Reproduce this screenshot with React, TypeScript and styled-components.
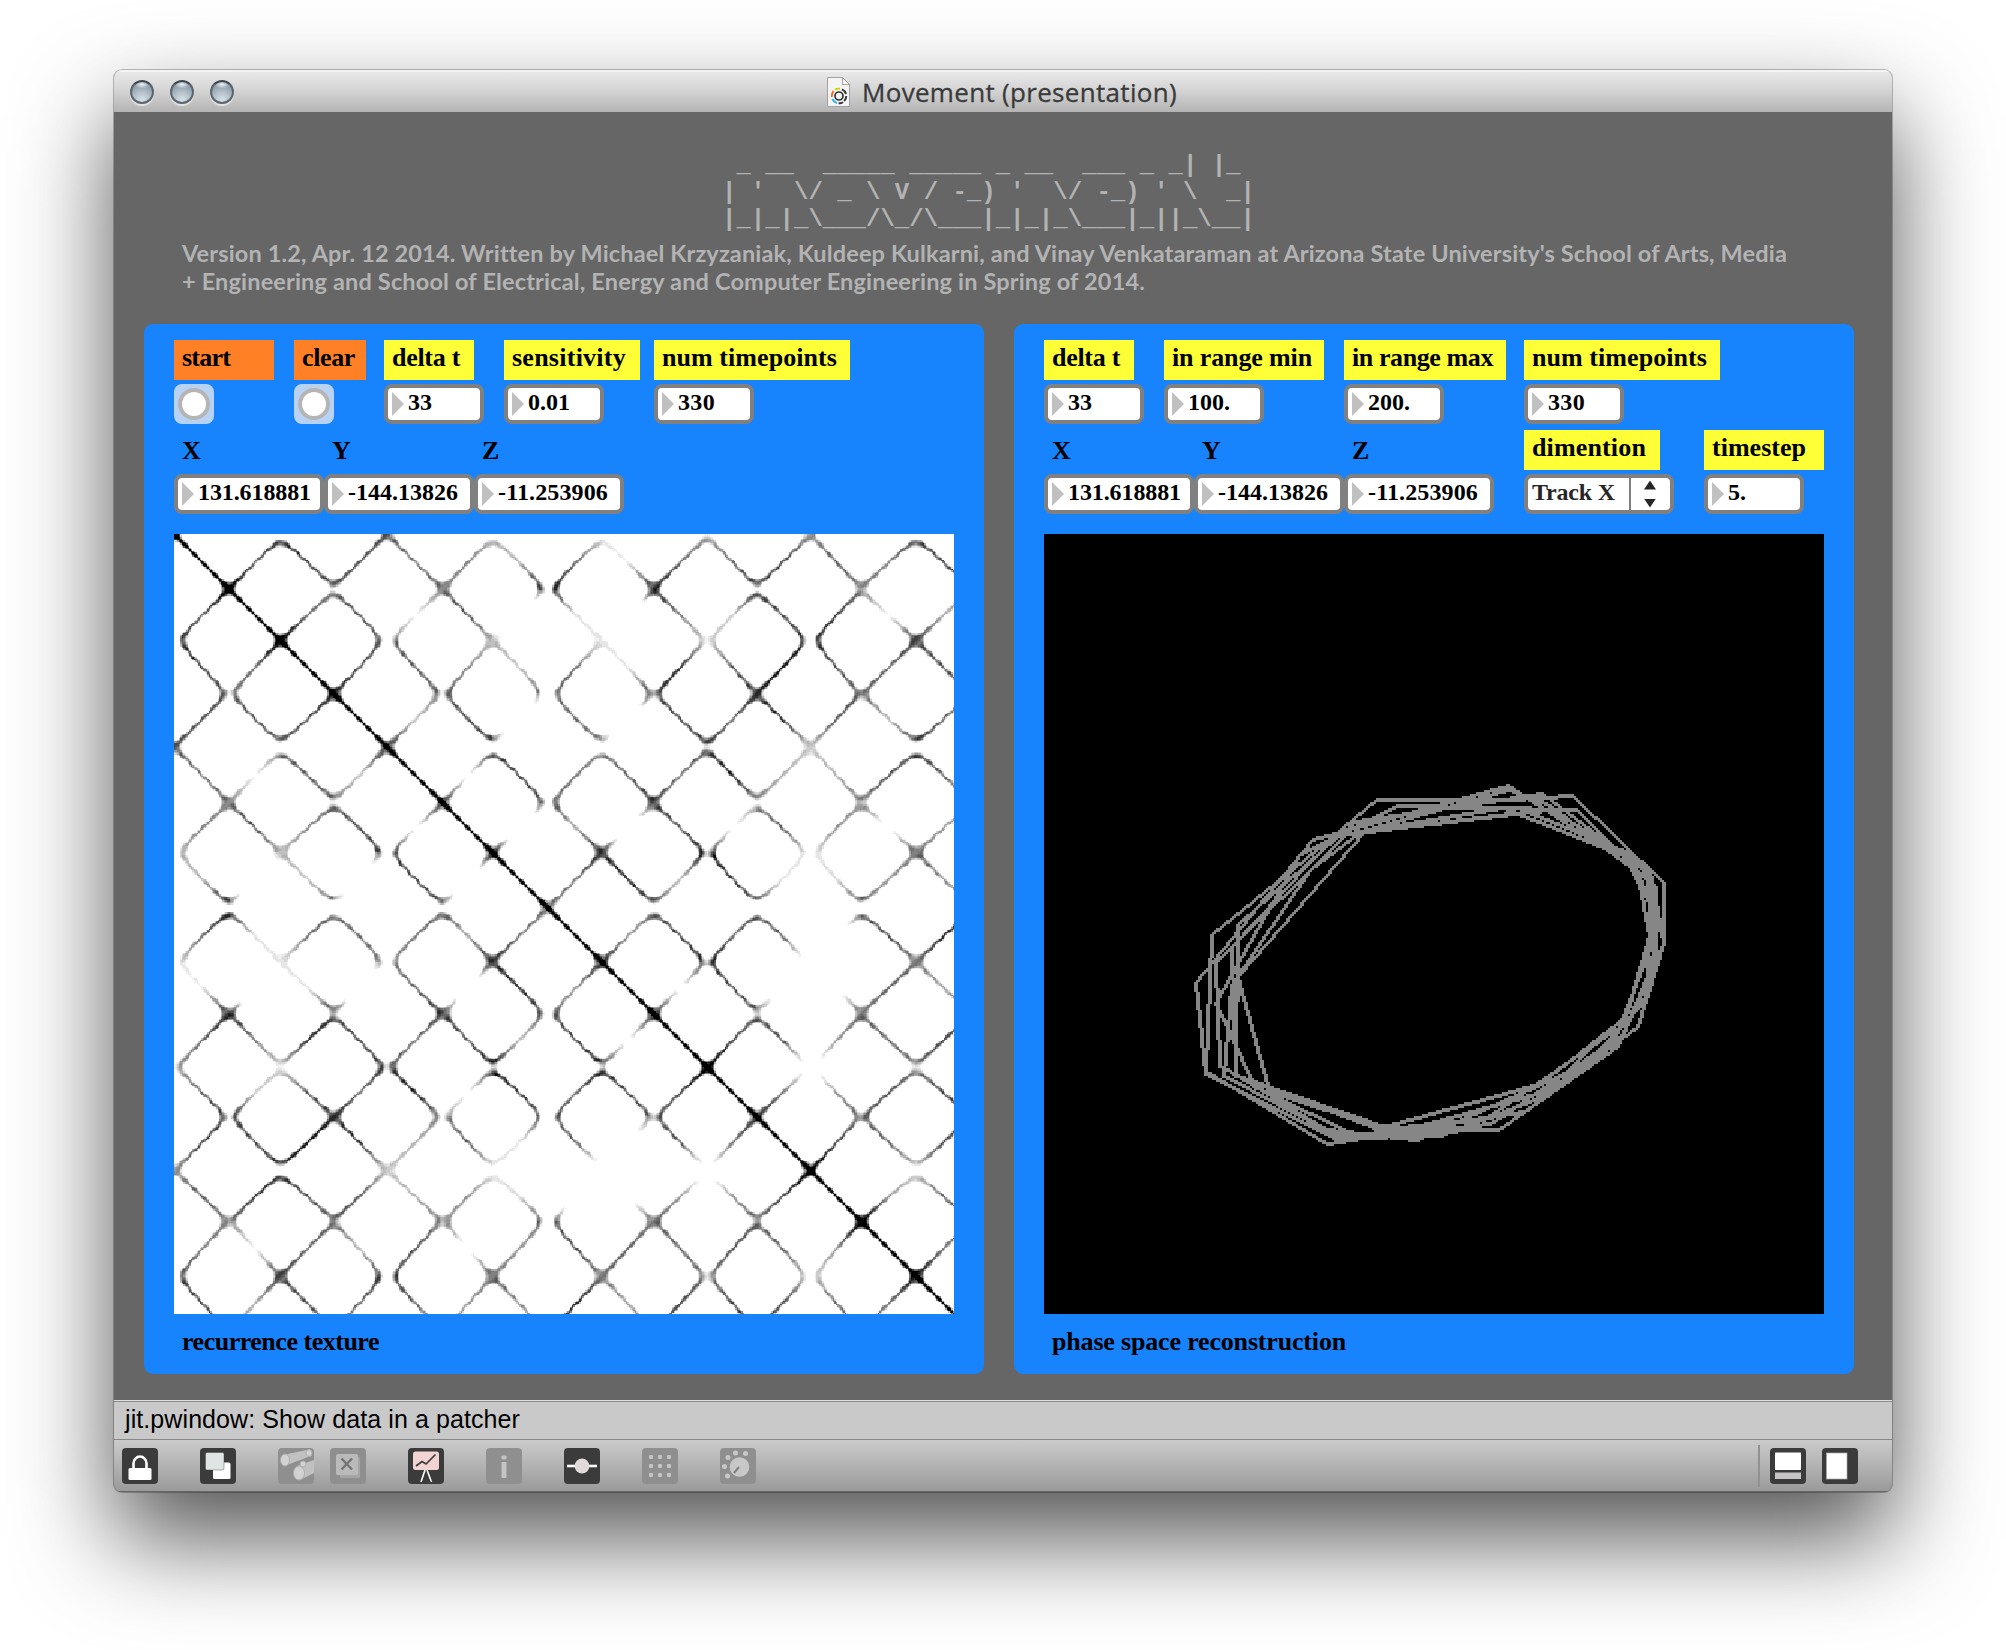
import React, { useLayoutEffect, useMemo, useRef, useState } from "react";
import styled, { createGlobalStyle } from "styled-components";

const Global = createGlobalStyle`
  * { box-sizing: border-box; }
  body { margin: 0; background: #fff; overflow: hidden; }
`;

/* ---------- window chrome ---------- */

const Desktop = styled.main`
  width: 2006px;
  height: 1650px;
  padding: 70px 0 0 114px;
  background: #fff;
`;

const Window = styled.section`
  width: 1778px;
  height: 1422px;
  display: flex;
  flex-direction: column;
  border-radius: 8px;
  overflow: hidden;
  background: #666;
  box-shadow: 0 0 0 1px rgba(0, 0, 0, 0.24), 0 46px 98px rgba(0, 0, 0, 0.68);
`;

const TitleBar = styled.header`
  height: 42px;
  flex: none;
  display: flex;
  align-items: center;
  padding: 2px 0 0 16px;
  background: linear-gradient(#ebebeb, #d3d3d3 50%, #b4b4b4);
  box-shadow: inset 0 2px 0 #f4f4f4;
`;

const Lights = styled.div`
  display: flex;
  gap: 16px;
  width: 697px;
`;

const Light = styled.span`
  width: 24px;
  height: 24px;
  border-radius: 50%;
  border: 2px solid #5c6670;
  border-top-color: #3f464e;
  background: radial-gradient(ellipse 8px 4px at 50% 12%, #eef2f5, transparent),
    radial-gradient(circle at 50% 90%, #d9e1e7 0, #b3c0ca 40%, #8193a1 85%);
  box-shadow: 0 2px 1px rgba(255, 255, 255, 0.6);
`;

const Title = styled.h1`
  margin: 0 0 0 12px;
  font: 400 26px/34px "Open Sans", "Noto Sans", sans-serif;
  -webkit-text-stroke: 0.3px #3a3a3a;
  color: #3a3a3a;
`;

const Patcher = styled.div`
  height: 1288px;
  flex: none;
  background: #666;
  display: flex;
  flex-direction: column;
`;

const Masthead = styled.div`
  height: 212px;
  flex: none;
  padding-top: 40px;
  color: #b3b3b3;
`;

const Banner = styled.pre`
  margin: 0 0 0 608px;
  height: 87px;
  font: 700 24px/27px "Liberation Mono", monospace;
`;

const Credits = styled.p`
  margin: 0 0 0 68px;
  font: 700 23.5px/28px Lato, sans-serif;
  white-space: nowrap;
`;

const Panels = styled.div`
  display: flex;
  gap: 30px;
  padding-left: 30px;
`;

const Panel = styled.article`
  width: 840px;
  height: 1050px;
  padding: 16px 30px 0;
  border-radius: 9px;
  background: #1783fc;
  color: #000;
  font: 700 26px/36px "Liberation Serif", serif;
`;

const ControlRow = styled.div<{ $cols: string }>`
  display: grid;
  grid-template-columns: ${(p) => p.$cols};
  height: 84px;
  margin-bottom: 6px;
`;

const Control = styled.div`
  display: flex;
  flex-direction: column;
  align-items: flex-start;
  gap: 4px;
`;

const Tag = styled.div<{ $w: number; $tone?: "orange" | "none" }>`
  width: ${(p) => p.$w}px;
  height: 40px;
  padding: ${(p) => (p.$tone === "none" ? 3 : 0)}px 0 0 8px;
  background: ${(p) => (p.$tone === "orange" ? "#ff8025" : p.$tone === "none" ? "transparent" : "#ffff37")};
  white-space: nowrap;
`;

const Field = styled.div<{ $w: number }>`
  width: ${(p) => p.$w}px;
  height: 40px;
  display: flex;
  border: 4px solid #808080;
  border-radius: 8px;
  background: #fff;
  font-size: 24px;
  line-height: 28px;
  white-space: nowrap;
`;

const Grip = styled.i`
  width: 12px;
  height: 24px;
  margin: 4px 4px 0;
  flex: none;
  background: #c0c0c0;
  clip-path: polygon(0 0, 100% 50%, 0 100%);
`;

const MenuText = styled.div`
  width: 103px;
  padding-left: 4px;
  border-right: 2px solid #808080;
  color: #262626;
`;

const Arrows = styled.div`
  flex: 1;
  display: flex;
  flex-direction: column;
  align-items: center;
  justify-content: center;
  gap: 9px;
  padding-right: 1px;
`;

const Arrow = styled.i<{ $down?: boolean }>`
  width: 12px;
  height: 9px;
  background: #262626;
  clip-path: ${(p) => (p.$down ? "polygon(0 0, 100% 0, 50% 100%)" : "polygon(50% 0, 100% 100%, 0 100%)")};
`;

const Bang = styled.div`
  width: 40px;
  height: 40px;
  display: grid;
  place-items: center;
  border-radius: 8px;
  background: #b7d2f2;
`;

const BangDot = styled.span`
  width: 32px;
  height: 32px;
  border: 4px solid #b5b5b5;
  border-radius: 50%;
  background: #fff;
`;

const Screen = styled.svg<{ $bg: string }>`
  display: block;
  width: 780px;
  height: 780px;
  margin-top: 14px;
  background: ${(p) => p.$bg};
`;

const Controls = styled.div`
  height: 180px;
  margin-bottom: 14px;
`;

const Caption = styled.div`
  padding: 10px 0 0 8px;
  white-space: nowrap;
`;

const Status = styled.div`
  height: 40px;
  flex: none;
  padding-left: 11px;
  background: #c9c9c9;
  border-top: 1px solid #dcdcdc;
  border-bottom: 1px solid #868686;
  box-shadow: inset 0 1px 0 #8c8c8c;
  color: #000;
  font: 400 25px/36px "Liberation Sans", Arial, sans-serif;
`;

const Toolbar = styled.footer`
  flex: 1;
  display: flex;
  align-items: flex-start;
  padding: 8px 34px 0 8px;
  background: linear-gradient(#cbcbcb, #b5b5b5 45%, #9a9a9a);
  border-bottom: 1px solid #666;
`;

const Tool = styled.span<{ $gap: number }>`
  display: flex;
  margin-right: ${(p) => p.$gap}px;
`;

const Divider = styled.span`
  width: 2px;
  height: 42px;
  margin: -3px 10px 0 auto;
  background: #919191;
`;

const TextRun = styled.span`
  display: inline-block;
  white-space: pre;
`;

/* Tracks a run of text out (or in) until it measures the given width. */
function Fit({ w, children }: { w: number; children: string }) {
  const ref = useRef<HTMLSpanElement>(null);
  const [tracking, setTracking] = useState(0);
  useLayoutEffect(() => {
    const el = ref.current;
    if (el) setTracking((w - el.getBoundingClientRect().width) / children.length);
  }, [w, children]);
  return (
    <TextRun ref={ref} style={{ letterSpacing: tracking }}>
      {children}
    </TextRun>
  );
}

/* ---------- recurrence plot ---------- */

const SPAN = 1548;
const TURNS = [8, 117, 219, 325, 430, 541, 640, 750, 857, 960, 1066, 1164, 1271, 1371, 1481, 1590].map(
  (t) => (t - 8) / SPAN
);
const PEAKS = [1.13, -1, 1, -0.93, 1.13, -1, 1, -1.1, 1, -0.985, 1.065, -0.925, 1.12, -0.965, 1, -1];

/* Strength where two turning points meet, per row, starting on the diagonal in steps of two. */
const NODES = [
  [1, 0.85, 0.65, 0.3, 0.08, 0.35, 0.4, 0.75],
  [1, 0.65, 0.6, 0.85, 0.85, 0.75, 0.5, 0.6],
  [1, 0.6, 0.3, 0.07, 0.2, 0.85, 0.75],
  [1, 0.6, 0.6, 0.75, 0.8, 0.6, 0.6],
  [1, 0.75, 0.5, 0.75, 0.2, 0.75],
  [0.7, 0.7, 0.8, 0.45, 0.5, 0.4],
  [0.95, 0.85, 0.95, 0.08, 0.65],
  [0.6, 0.65, 0.65, 0.6, 0.6],
  [1, 0.85, -0.2, 0.5],
  [0.9, 0.65, 0.6, 0.6],
  [1, -0.2, 0.5],
  [0.95, 0.6, 0.6],
  [1, 0.2],
  [1, 0.5],
  [1],
  [1],
];

/* Strength halfway between turning points, per row, starting one cell right of the diagonal. */
const CELLS = [
  [0.5, 0.75, 0.6, 0.5, 0.6, 0.3, 0.6, 0.05, 0.55, 0.6, 0.7, 0.65, 0.4, 0.7],
  [0.5, 0.65, 0, 0.65, -1, 0.1, -1, 0.5, 0.15, 0.65, 0.7, 0, 0.3],
  [0.65, 0.6, 0.55, 0.2, 0.5, 0.08, 0.75, 0.6, 0.85, 0.65, 0.5, 0.65],
  [0.25, 0.7, -0.8, 0.55, -0.8, 0.7, 0.45, 0.8, 0.6, 0.25, 0.65],
  [-0.05, 0.7, 0.5, 0.6, 0.5, 0.85, 0.3, 0.3, 0.85, 0.6],
  [-0.8, 0.3, -0.6, 0.6, -0.05, 0.65, 0.55, -0.1, 0.4],
  [0.5, 0.85, 0.25, 0.75, 0.08, 0.15, 0.5, 0.4],
  [0.45, 0.7, 0.6, 0.6, -0.4, 0.7, 0.8],
  [-0.1, 0.65, -0.5, -0.2, 0.6, 0.35],
  [0.7, 0.65, 0.35, 0.6, 0.7],
  [0.55, 0.4, 0.6, 0.75],
  [0.7, 0.6, 0.65],
  [0.35, 0.6],
  [0.55],
  [],
];

const node = (i: number, j: number) => {
  const a = Math.min(i, j);
  const b = Math.max(i, j);
  return NODES[a]?.[(b - a) / 2] ?? 0.5;
};
const cell = (i: number, j: number) => {
  const a = Math.min(i, j);
  const b = Math.max(i, j);
  return a === b ? 1 : CELLS[a]?.[b - a - 1] ?? 0.5;
};

function recurrencePaths(size: number, levels: number) {
  const seg: number[] = [];
  const frac: number[] = [];
  const val: number[] = [];
  const slope: number[] = [];
  for (let n = 0; n < size; n++) {
    const t = (n + 0.5) / size;
    let k = 0;
    while (k < 14 && TURNS[k + 1] <= t) k++;
    const len = TURNS[k + 1] - TURNS[k];
    const u = (t - TURNS[k]) / len;
    const half = (PEAKS[k] - PEAKS[k + 1]) / 2;
    const wobble = 0.045 * Math.sin(Math.PI * u) * Math.sin(n * 0.95);
    seg.push(k);
    frac.push(u);
    val.push((PEAKS[k] + PEAKS[k + 1]) / 2 + half * Math.cos(Math.PI * u) + wobble);
    slope.push((half * Math.PI * Math.sin(Math.PI * u)) / (len * size));
  }
  const paths: string[] = Array(levels).fill("");
  for (let r = 0; r < size; r++) {
    let run = -1;
    let start = 0;
    for (let c = 0; c <= size; c++) {
      let lv = -1;
      if (c < size) {
        const i = seg[r];
        const j = seg[c];
        const reach = 0.75 * Math.hypot(slope[r], slope[c]) + 0.07;
        let d = 1.35 * (1 - Math.abs(val[r] - val[c]) / reach);
        if (d > 0) {
          const even = (i + j) % 2 === 0;
          const s = even ? (frac[r] + frac[c]) / 2 : (frac[r] + 1 - frac[c]) / 2;
          const n1 = even ? node(i, j) : node(i, j + 1);
          const n2 = even ? node(i + 1, j + 1) : node(i + 1, j);
          const mid = cell(i, j);
          let m = s < 0.5 ? n1 + (mid - n1) * s * 2 : mid + (n2 - mid) * (s * 2 - 1);
          if (Math.abs(r - c) < 3) m = 1;
          else m *= 0.88 + 0.16 * Math.sin((r + c) * 0.55);
          d = Math.min(1, d) * m;
          if (d > 0.02) lv = Math.min(levels - 1, Math.floor(d * levels));
        }
      }
      if (lv !== run) {
        if (run >= 0) paths[run] += `M${start} ${r}h${c - start}v1h${start - c}z`;
        run = lv;
        start = c;
      }
    }
  }
  return paths;
}

function RecurrencePlot() {
  const paths = useMemo(() => recurrencePaths(520, 20), []);
  return (
    <Screen $bg="#fff" viewBox="0 0 520 520" shapeRendering="crispEdges">
      {paths.map((d, k) => {
        const g = Math.round(255 * (1 - (k + 1) / 20));
        return <path key={k} d={d} fill={`rgb(${g},${g},${g})`} />;
      })}
    </Screen>
  );
}

/* ---------- phase space orbit ---------- */

const ORBIT = [
  [48, 638], [395, 212], [985, 50], [1350, 285], [1425, 430], [1340, 740], [1080, 940], [600, 1075], [270, 965],
  [172, 620], [550, 185], [1110, 122], [1410, 300], [1452, 515], [1375, 765], [1030, 1028], [440, 1122], [80, 905],
  [96, 490], [340, 295], [585, 90], [985, 90], [1175, 78], [1450, 342], [1450, 515], [1315, 825], [955, 1078], [455, 1090], [130, 920],
  [155, 640], [390, 300], [540, 185], [985, 60], [1110, 110], [1375, 310], [1410, 500], [1330, 760], [920, 1045], [600, 1080], [168, 915],
  [172, 460], [520, 155], [1085, 70], [1405, 310], [1415, 520], [1300, 810], [930, 1060], [540, 1105], [225, 955],
  [105, 697], [360, 250], [655, 105], [1190, 122], [1415, 345], [1400, 690], [1215, 880], [710, 1108], [440, 1080], [120, 885],
  [105, 575], [500, 190], [965, 112], [1360, 270], [1435, 470], [1395, 680], [1090, 965], [655, 1085], [168, 915],
  [157, 530], [460, 200], [1035, 125], [1350, 250], [1425, 350], [1425, 560], [1325, 800], [1060, 990], [780, 1095], [460, 1105], [75, 912],
  [48, 638],
];

function orbitPath() {
  let d = "";
  const pts = ORBIT.map(([x, y]) => [Math.round(x / 6 + 68), Math.round(y / 6 + 118)]);
  for (let k = 1; k < pts.length; k++) {
    const [x0, y0] = pts[k - 1];
    const [x1, y1] = pts[k];
    const steps = Math.max(Math.abs(x1 - x0), Math.abs(y1 - y0));
    const flat = Math.abs(x1 - x0) >= Math.abs(y1 - y0);
    for (let s = 0; s <= steps; s++) {
      const x = Math.round(x0 + ((x1 - x0) * s) / steps);
      const y = Math.round(y0 + ((y1 - y0) * s) / steps);
      d += flat ? `M${x} ${y - 1}h1v2h-1z` : `M${x - 1} ${y}h2v1h-2z`;
    }
  }
  return d;
}

function PhasePlot() {
  const d = useMemo(orbitPath, []);
  return (
    <Screen $bg="#000" viewBox="0 0 390 390" shapeRendering="crispEdges">
      <path d={d} fill="#868686" />
    </Screen>
  );
}

/* ---------- small parts ---------- */

function NumberField({ w = 100, t, children }: { w?: number; t: number; children: string }) {
  return (
    <Field $w={w}>
      <Grip />
      <Fit w={t}>{children}</Fit>
    </Field>
  );
}

type LabelledProps = {
  label: string;
  tagW: number;
  labelW: number;
  tone?: "orange" | "none";
  children: React.ReactNode;
};

function Labelled({ label, tagW, labelW, tone, children }: LabelledProps) {
  return (
    <Control>
      <Tag $w={tagW} $tone={tone}>
        <Fit w={labelW}>{label}</Fit>
      </Tag>
      {children}
    </Control>
  );
}

function Coordinates() {
  return (
    <>
      <Labelled label="X" tagW={60} labelW={17} tone="none">
        <NumberField w={150} t={113}>131.618881</NumberField>
      </Labelled>
      <Labelled label="Y" tagW={60} labelW={17} tone="none">
        <NumberField w={150} t={110}>-144.13826</NumberField>
      </Labelled>
      <Labelled label="Z" tagW={60} labelW={16} tone="none">
        <NumberField w={150} t={110}>-11.253906</NumberField>
      </Labelled>
    </>
  );
}

function DocIcon() {
  return (
    <svg width="23" height="30" viewBox="0 0 23 30">
      <path d="M.5.5h15l7 7v22H.5z" fill="#f4f4f4" stroke="#a2a2a2" />
      <path d="M15.5.5v7h7z" fill="#fff" stroke="#8e8e8e" strokeWidth=".8" />
      <circle cx="12" cy="19" r="4" fill="none" stroke="#333" strokeWidth="1.7" />
      <g fill="none" strokeWidth="1.9">
        <path d="M8 12.6A7.3 7.3 0 0 1 13 11.8" stroke="#c9d400" />
        <path d="M4.8 20A7.3 7.3 0 0 1 6.6 14" stroke="#f26a21" />
        <path d="M10 26A7.3 7.3 0 0 1 5.4 22" stroke="#1fb4ec" />
        <path d="M15 12.4A7.3 7.3 0 0 1 19 17M19.3 19A7.3 7.3 0 0 1 17.2 24M16 25.2A7.3 7.3 0 0 1 11.6 26.3" stroke="#333" />
      </g>
    </svg>
  );
}

const Icon = ({ dim, children }: { dim?: boolean; children: React.ReactNode }) => (
  <svg width="36" height="36" viewBox="0 0 36 36">
    <rect width="36" height="36" rx="4" fill={dim ? "#8f8f8f" : "#3b3b3b"} />
    {children}
  </svg>
);

const dots = [9, 18, 27];

export default function App() {
  return (
    <Desktop>
      <Global />
      <Window>
        <TitleBar>
          <Lights>
            <Light />
            <Light />
            <Light />
          </Lights>
          <DocIcon />
          <Title>
            <Fit w={315}>Movement (presentation)</Fit>
          </Title>
        </TitleBar>

        <Patcher>
          <Masthead>
            <Banner>
              {[
                " _ __  _____ _____ _ __  ___ _ _| |_",
                "| '  \\/ _ \\ V / -_) '  \\/ -_) ' \\  _|",
                "|_|_|_\\___/\\_/\\___|_|_|_\\___|_||_\\__|",
              ].join("\n")}
            </Banner>
            <Credits>
              <Fit w={1604}>
                {"Version 1.2, Apr. 12 2014. Written by Michael Krzyzaniak, Kuldeep Kulkarni, and Vinay Venkataraman at Arizona State University's School of Arts, Media"}
              </Fit>
              <br />
              <Fit w={963}>
                {"+ Engineering and School of Electrical, Energy and Computer Engineering in Spring of 2014."}
              </Fit>
            </Credits>
          </Masthead>

          <Panels>
            <Panel>
              <Controls>
                <ControlRow $cols="120px 90px 120px 150px 1fr">
                  <Labelled label="start" tagW={100} labelW={48} tone="orange">
                    <Bang><BangDot /></Bang>
                  </Labelled>
                  <Labelled label="clear" tagW={72} labelW={53} tone="orange">
                    <Bang><BangDot /></Bang>
                  </Labelled>
                  <Labelled label="delta t" tagW={90} labelW={68}>
                    <NumberField t={24}>33</NumberField>
                  </Labelled>
                  <Labelled label="sensitivity" tagW={136} labelW={114}>
                    <NumberField t={42}>0.01</NumberField>
                  </Labelled>
                  <Labelled label="num timepoints" tagW={196} labelW={175}>
                    <NumberField t={37}>330</NumberField>
                  </Labelled>
                </ControlRow>
                <ControlRow $cols="150px 150px 1fr">
                  <Coordinates />
                </ControlRow>
              </Controls>
              <RecurrencePlot />
              <Caption>
                <Fit w={197}>recurrence texture</Fit>
              </Caption>
            </Panel>

            <Panel>
              <Controls>
                <ControlRow $cols="120px 180px 180px 1fr">
                  <Labelled label="delta t" tagW={90} labelW={68}>
                    <NumberField t={24}>33</NumberField>
                  </Labelled>
                  <Labelled label="in range min" tagW={160} labelW={140}>
                    <NumberField t={42}>100.</NumberField>
                  </Labelled>
                  <Labelled label="in range max" tagW={162} labelW={141}>
                    <NumberField t={42}>200.</NumberField>
                  </Labelled>
                  <Labelled label="num timepoints" tagW={196} labelW={175}>
                    <NumberField t={37}>330</NumberField>
                  </Labelled>
                </ControlRow>
                <ControlRow $cols="150px 150px 180px 180px 1fr">
                  <Coordinates />
                  <Labelled label="dimention" tagW={136} labelW={114}>
                    <Field $w={150}>
                      <MenuText>
                        <Fit w={83}>Track X</Fit>
                      </MenuText>
                      <Arrows>
                        <Arrow />
                        <Arrow $down />
                      </Arrows>
                    </Field>
                  </Labelled>
                  <Labelled label="timestep" tagW={120} labelW={94}>
                    <NumberField t={18}>5.</NumberField>
                  </Labelled>
                </ControlRow>
              </Controls>
              <PhasePlot />
              <Caption>
                <Fit w={294}>phase space reconstruction</Fit>
              </Caption>
            </Panel>
          </Panels>
        </Patcher>

        <Status>
          <Fit w={395}>jit.pwindow: Show data in a patcher</Fit>
        </Status>

        <Toolbar>
          <Tool $gap={42}>
            <Icon>
              <path d="M11.5 21v-5.500a6.500 7 0 0 1 13 0V21" fill="none" stroke="#fff" strokeWidth="2.600" />
              <rect x="6.500" y="20" width="23" height="12" rx="1.500" fill="#fff" />
            </Icon>
          </Tool>
          <Tool $gap={42}>
            <Icon>
              <rect x="13" y="14.500" width="17.500" height="16.500" rx="1.500" fill="#fff" />
              <rect x="5.500" y="4.500" width="18.500" height="17.500" rx="1.500" fill="#dfe5e4" stroke="#3b3b3b" strokeWidth=".4" />
            </Icon>
          </Tool>
          <Tool $gap={16}>
            <Icon dim>
              <g fill="#c1c1c1">
                <path d="M5 7 31 1.500l3 6L9 17z" />
                <path d="M19 18 36 12v13L24 31z" />
              </g>
              <g fill="#d2d2d2" stroke="#adadad" strokeWidth="1">
                <ellipse cx="7" cy="12" rx="4.500" ry="6" />
                <ellipse cx="31" cy="5" rx="3" ry="3.500" />
                <ellipse cx="21" cy="25" rx="5.500" ry="7" />
                <ellipse cx="25" cy="16" rx="3" ry="3" />
              </g>
            </Icon>
          </Tool>
          <Tool $gap={42}>
            <Icon dim>
              <rect x="10" y="9" width="20" height="21" rx="1.500" fill="#a5a5a5" />
              <rect x="6" y="6" width="22" height="21" rx="1.500" fill="#bababa" />
              <path d="m11.500 10.500 10.500 11m0-11-10.500 11" stroke="#747474" strokeWidth="2.400" />
            </Icon>
          </Tool>
          <Tool $gap={42}>
            <Icon>
              <rect x="5" y="3.500" width="26" height="18.500" rx="2.500" fill="#f2d4d2" />
              <path d="m8 18 6-4.500 4 2.500 9.500-9.500" fill="none" stroke="#3b3b3b" strokeWidth="1.700" />
              <path d="m17 22-4 12m6-12 4.500 12" stroke="#fff" strokeWidth="1.600" />
            </Icon>
          </Tool>
          <Tool $gap={42}>
            <Icon dim>
              <rect x="15.500" y="7.500" width="5" height="4" rx="1" fill="#c4c4c4" />
              <rect x="15.500" y="14" width="5" height="16" rx="1" fill="#c4c4c4" />
            </Icon>
          </Tool>
          <Tool $gap={42}>
            <Icon>
              <path d="M3 18h30" stroke="#fff" strokeWidth="2.600" />
              <circle cx="18" cy="18" r="7.400" fill="#e0dadb" />
            </Icon>
          </Tool>
          <Tool $gap={42}>
            <Icon dim>
              {dots.map((y) => dots.map((x) => <rect key={`${x}-${y}`} x={x - 2} y={y - 2} width="4" height="4" rx="1" fill="#c4c4c4" />))}
            </Icon>
          </Tool>
          <Tool $gap={0}>
            <Icon dim>
              <g fill="#c8c8c8">
                <circle cx="19.500" cy="19" r="9.800" />
                <circle cx="7.500" cy="28" r="2.500" />
                <circle cx="4.500" cy="18.500" r="2.500" />
                <circle cx="8" cy="9.500" r="2.500" />
                <circle cx="15.500" cy="5" r="2.500" />
                <circle cx="25.500" cy="5.500" r="2.500" />
              </g>
              <path d="m14 25 5-6" stroke="#808080" strokeWidth="2" />
            </Icon>
          </Tool>
          <Divider />
          <Tool $gap={16}>
            <Icon>
              <rect x="5" y="4.500" width="26" height="17.500" fill="#fff" />
              <rect x="5" y="24.500" width="26" height="6.500" fill="#c6c4c4" />
            </Icon>
          </Tool>
          <Tool $gap={0}>
            <Icon>
              <rect x="4.500" y="5" width="20.500" height="26" fill="#fff" stroke="#aaa" strokeWidth=".7" />
            </Icon>
          </Tool>
        </Toolbar>
      </Window>
    </Desktop>
  );
}
